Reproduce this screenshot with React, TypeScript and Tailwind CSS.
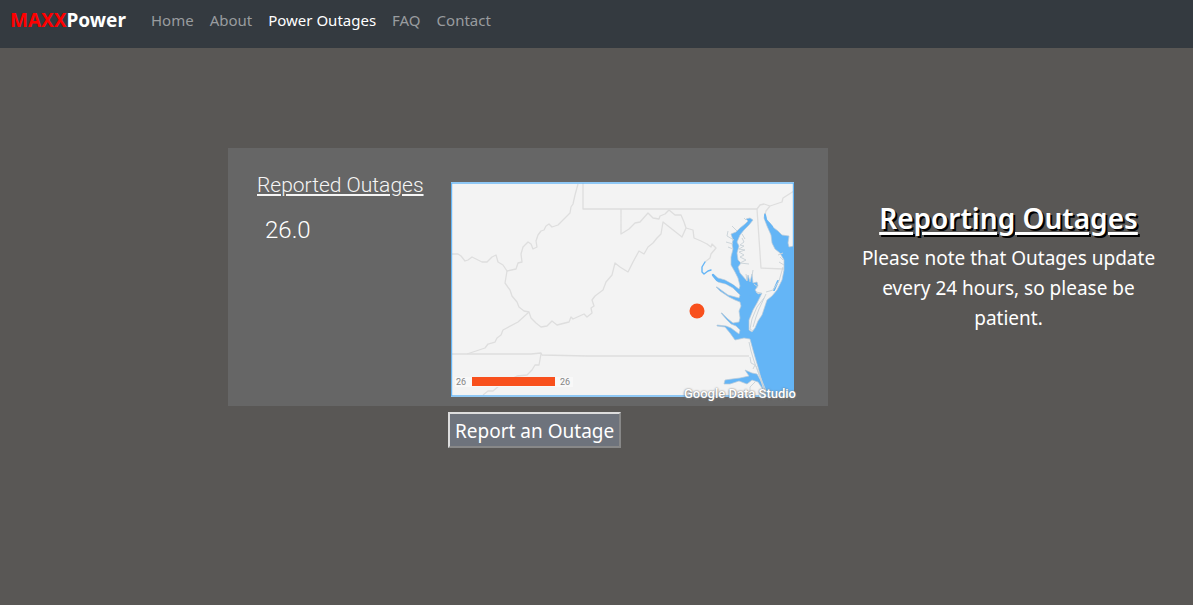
import React from "react";

const links = ["Home", "About", "Power Outages", "FAQ", "Contact"];

const borders = [
  "M451 254L458 254L461 256L465 261L468 260L472 257L476 259L482 262L487 262L492 257L496 255L498 262L503 265L507 271L516 269L518 263L522 262L521 254L523 247L528 242L531 244L533 249L537 247L536 241L538 235L541 231L544 230L546 226L549 224L552 227L558 225L564 219L570 213L571 207L573 204L575 195L578 184",
  "M583 183L583 209L757 209L761 268L784 269",
  "M507 271L505 283L510 290L512 296L517 302L519 307L524 311L529 312L531 318L536 323L541 327L547 326L552 321L557 325L569 322L571 317L573 319L584 314L587 317L592 313L591 308L594 306L592 300L595 296L603 290L606 282L612 275L615 263L620 267L628 272L633 262L639 251L644 254L648 247L653 243L657 238L661 234L663 222L682 237L686 228L684 222L681 215L675 215L669 210L665 214L660 216L659 219L653 218L648 213L640 222L635 223L629 229L621 234L621 209",
  "M686 228L693 230L694 238L701 241L707 244L711 247L712 244L716 248L711 254L710 258L705 262",
  "M529 312L518 322L503 330L501 335L497 338L495 342L488 344L485 348L473 352L467 354",
  "M451 354L531 354L541 353L542 355L587 356L749 356",
  "M541 354L539 365L535 365L532 370L527 375L517 376L500 385L493 391L488 391L483 395",
  "M757 209L760 205L764 204L770 206L782 202L783 198L794 191M770 206L766 211L765 215",
];

const water =
  "M765 213L767 221L770 223L774 228L778 231L782 235L789 236L788 243L789 247L794 246V396H766L764 389L761 378L758 367L755 357L753 350L750 339L744 338L735 340L730 333L725 327L717 326L717 325L726 326L731 328L735 331L739 334L740 330L736 326L731 324L727 320L721 313L722 313L728 319L733 323L739 322L740 318L739 311L741 306L740 302L735 300L729 297L720 291L716 287L717 287L728 295L739 298L740 295L733 288L726 284L718 282L713 276L713 274L718 278L725 280L732 284L739 289L740 286L738 278L735 272L731 265L731 257L733 249L732 244L733 240L731 234L736 232L740 228L745 224L748 221L746 219L750 218L753 220L749 225L744 230L740 235L737 242L739 246L737 253L738 260L741 263L738 267L740 273L747 281L748 275L750 282L752 274L753 283L757 282L758 286L755 290L758 294L762 293L757 303L753 310L749 320L749 330L752 332L755 328L758 321L762 315L767 300L772 296L777 290L782 280L784 270L784 260L780 253L775 249L772 243L771 235L767 226L764 218Z";

const sound =
  "M725 380L732 379L740 378L749 376L745 370L752 373L757 374L762 383L764 391L758 382L752 380L747 384L739 381L730 384L724 384Z";

const shoreline = [
  "M737 231L732 226M734 240L727 236L728 231M733 244L726 242M733 249L728 247M742 238L744 242L740 245L744 246L739 249L745 250L739 252L744 255L740 257L746 260L740 263L749 264M742 234L745 239M746 220L744 218",
  "M747 281L746 274M752 276L753 270M758 287L754 284M761 293L756 292",
  "M764 298L757 307L752 319L750 329L753 331M766 294L759 309L756 317L753 327",
  "M783 267L779 281L773 290L766 292M780 257L783 260M783 253L778 255M784 265L779 262",
  "M749 342L751 351L754 361L758 372L765 393M750 357L751 363L755 365L753 369M756 366L762 381L766 391",
  "M750 396L750 387L755 382",
];

function OutageMap() {
  return (
    <svg
      viewBox="451 182 343 215"
      className="block w-full"
      role="img"
      aria-label="Map of reported outages"
    >
      <rect x="451" y="182" width="343" height="215" fill="#f3f3f3" />
      <g fill="none" stroke="#dedede" strokeWidth="1.3" strokeLinejoin="round">
        {borders.map((d) => (
          <path key={d} d={d} />
        ))}
      </g>
      <g fill="#64b5f6" stroke="#b9cad8" strokeWidth="0.7" strokeLinejoin="round">
        <path d={water} />
        <path d={sound} />
      </g>
      <g fill="none" stroke="#64b5f6" strokeLinejoin="round" strokeLinecap="round">
        <path d="M705 262L702 267L702 272L704 274L708 271L711 270" strokeWidth="1.4" />
        <path d="M713 275L717 280L725 282L733 286L739 292" strokeWidth="2.4" />
        <path d="M765 215L766 220L772 227" strokeWidth="2" />
        <path d="M778 281L774 290" strokeWidth="2" />
        <path d="M750 296V298" strokeWidth="2" />
      </g>
      <g fill="none" stroke="#cdd5da" strokeWidth="1" strokeLinejoin="round">
        {shoreline.map((d) => (
          <path key={d} d={d} />
        ))}
      </g>
      <circle cx="697" cy="311" r="7.5" fill="#f8501d" />
      <rect x="455" y="377" width="118" height="10" fill="#f8f8f8" />
      <rect x="472" y="377" width="83" height="9" fill="#f8501d" />
      <g fill="#858585" className="font-['Roboto',sans-serif] text-[9px]">
        <text x="456" y="385">26</text>
        <text x="560" y="385">26</text>
      </g>
      <rect x="451.5" y="183" width="342" height="213" fill="none" stroke="#64b5f6" strokeWidth="1.4" />
    </svg>
  );
}

export default function App() {
  return (
    <div className="min-h-screen bg-[#595755] font-['Noto_Sans',sans-serif] text-white">
      <nav className="flex h-12 items-start bg-[#343a40] px-[10px] pt-[5px]">
        <a href="#" className="mr-[25px] text-[19px] leading-[30px] font-bold">
          <span className="text-[#ff0000]">MAXX</span>Power
        </a>
        <ul className="flex gap-4 text-[15px] leading-[30px]">
          {links.map((link) => (
            <li key={link}>
              <a
                href="#"
                className={link === "Power Outages" ? "text-white" : "text-[#999c9f]"}
              >
                {link}
              </a>
            </li>
          ))}
        </ul>
      </nav>

      <main className="grid grid-cols-[228fr_600px_365fr] pt-[100px]">
        <div className="col-start-2 flex flex-col gap-[6px]">
          <section className="flex bg-[#666666] pb-[9px] font-['Roboto',sans-serif]">
            <div className="w-[223px] shrink-0 pt-[22px] pl-[29px]">
              <h2 className="text-[21px] leading-[30px] font-light text-[#f5f5f5] underline decoration-2 underline-offset-2">
                Reported Outages
              </h2>
              <p className="mt-[14px] pl-2 text-2xl leading-8 font-light">26.0</p>
            </div>
            <div className="relative mr-[34px] flex-1 pt-[34px]">
              <OutageMap />
              <span className="absolute right-[-2px] bottom-[-5px] text-[13px] leading-4 font-medium whitespace-nowrap [text-shadow:0_0_2px_#777,0_1px_2px_#777]">
                Google Data Studio
              </span>
            </div>
          </section>
          <button
            type="button"
            className="ml-[220px] self-start border-2 border-t-[#dddddd] border-r-[#888888] border-b-[#888888] border-l-[#dddddd] bg-[#6e737c] px-[5px] pt-[2px] text-[19px] leading-[30px]"
          >
            Report an Outage
          </button>
        </div>
        <section className="pt-[52px] pr-8 pl-7 text-center">
          <h1 className="text-[28px] leading-9 font-semibold underline decoration-[3px] underline-offset-[3px] [text-shadow:2px_2px_#000]">
            Reporting Outages
          </h1>
          <p className="mt-[7px] text-[19px] leading-[30px]">
            Please note that Outages update every 24 hours, so please be patient.
          </p>
        </section>
      </main>
    </div>
  );
}
